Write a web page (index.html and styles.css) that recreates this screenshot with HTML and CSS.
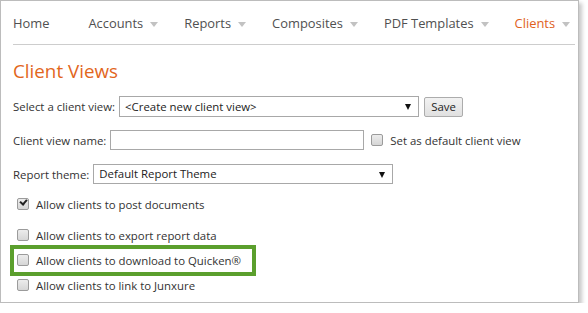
FILE: index.html
```html
<!DOCTYPE html>
<html lang="en">
<head>
  <meta charset="UTF-8">
  <title>Client Views</title>
  <link rel="stylesheet" href="styles.css">
</head>
<body>
  <div class="frame">
    <nav class="tabs">
      <a class="tab tab-home">Home</a>
      <a class="tab">Accounts <span class="caret"></span></a>
      <a class="tab">Reports <span class="caret"></span></a>
      <a class="tab">Composites <span class="caret"></span></a>
      <a class="tab">PDF Templates <span class="caret"></span></a>
      <a class="tab active">Clients <span class="caret"></span></a>
    </nav>

    <h1>Client Views</h1>

    <form class="view-form">
      <div class="row row-select">
        <label>Select a client view:</label>
        <div class="select select-view">&lt;Create new client view&gt;<span class="arrow"></span></div>
        <button type="button" class="btn">Save</button>
      </div>

      <div class="row row-name">
        <label>Client view name:</label>
        <input type="text" class="text-input">
        <label class="check"><input type="checkbox"> Set as default client view</label>
      </div>

      <div class="row row-theme">
        <label>Report theme:</label>
        <div class="select select-theme">Default Report Theme<span class="arrow"></span></div>
      </div>

      <label class="check option opt-post"><input type="checkbox" checked> Allow clients to post documents</label>
      <label class="check option opt-export"><input type="checkbox"> Allow clients to export report data</label>
      <div class="highlight">
        <label class="check option"><input type="checkbox"> Allow clients to download to Quicken®</label>
      </div>
      <label class="check option opt-junxure"><input type="checkbox"> Allow clients to link to Junxure</label>
    </form>
  </div>
</body>
</html>
```

FILE: styles.css
```css
body {
  margin: 0;
  font-family: "Open Sans", "Noto Sans", sans-serif;
  font-size: 11.4px;
  color: #333;
  background-color: #fff;
}
.frame {
  box-sizing: border-box;
  width: 579px;
  height: 303px;
  border: 1px solid #bcbcbc;
  padding: 0 3px 0 12px;
  background-color: #fff;
  box-shadow: 3px 3px 4px rgba(0, 0, 0, 0.22);
}

/* top navigation */
.tabs {
  display: flex;
  align-items: center;
  height: 43px;
  border-bottom: 1px solid #cdcdcd;
  font-size: 12.9px;
  color: #505050;
}
.tab {
  display: flex;
  align-items: center;
  margin-right: 26px;
  white-space: nowrap;
}
.tab-home {
  margin-right: 39px;
}
.tab.active {
  color: #e0611d;
  margin-right: 0;
}
.caret {
  display: inline-block;
  width: 0;
  height: 0;
  margin-left: 7px;
  margin-top: 3px;
  border-left: 4px solid transparent;
  border-right: 4px solid transparent;
  border-top: 5px solid #c2c2c2;
}

h1 {
  margin: 14px 0 0;
  font-size: 18.8px;
  line-height: 24px;
  font-weight: 400;
  color: #e2661c;
}

/* form rows */
.view-form {
  margin-top: 13px;
}
.row {
  display: flex;
  align-items: center;
}
.row label {
  margin-right: 4px;
  white-space: nowrap;
}
.row label.check {
  margin-right: 0;
}
.row-name {
  margin-top: 13px;
}
.row-theme {
  margin-top: 14px;
}
.select {
  position: relative;
  box-sizing: border-box;
  height: 21px;
  line-height: 19px;
  border: 1px solid #a8a8a8;
  padding-left: 5px;
  color: #222;
  background-color: #fff;
}
.select-view {
  width: 300px;
}
.select-theme {
  width: 300px;
  height: 20px;
  line-height: 18px;
}
.arrow {
  position: absolute;
  right: 7px;
  top: 7px;
  border-left: 3px solid transparent;
  border-right: 3px solid transparent;
  border-top: 6px solid #111;
}
.btn {
  box-sizing: border-box;
  height: 20px;
  width: 39px;
  margin-left: 5px;
  padding: 0;
  font-family: inherit;
  font-size: 11.4px;
  color: #222;
  border: 1px solid #acacac;
  border-radius: 2px;
  background: linear-gradient(#f2f2f2, #e0e0e0);
}
.text-input {
  box-sizing: border-box;
  width: 254px;
  height: 20px;
  margin: 0 7px 0 0;
  border: 1px solid #a8a8a8;
  padding: 0 4px;
}

/* checkboxes */
.check {
  display: flex;
  align-items: center;
  white-space: nowrap;
}
.check input {
  appearance: none;
  -webkit-appearance: none;
  position: relative;
  box-sizing: border-box;
  width: 12px;
  height: 12px;
  margin: 0 7px 0 0;
  border: 1px solid #9b9b9b;
  border-radius: 2px;
  background: linear-gradient(#ececec, #d6d6d6);
}
.check input:checked::after {
  content: "";
  position: absolute;
  left: 2px;
  top: 0;
  width: 5px;
  height: 3px;
  border-left: 2px solid #222;
  border-bottom: 2px solid #222;
  transform: rotate(-50deg);
}
.option {
  height: 16px;
  padding-left: 4px;
}
.opt-post {
  margin-top: 12px;
}
.opt-export {
  margin-top: 15px;
}
.highlight {
  box-sizing: border-box;
  width: 246px;
  margin: 2px 0 0 -3px;
  padding: 3px 0 4px 3px;
  border: 4px solid #5b9f2d;
}
.highlight .option {
  padding-left: 0;
}
.opt-junxure {
  margin-top: 1px;
}
```
